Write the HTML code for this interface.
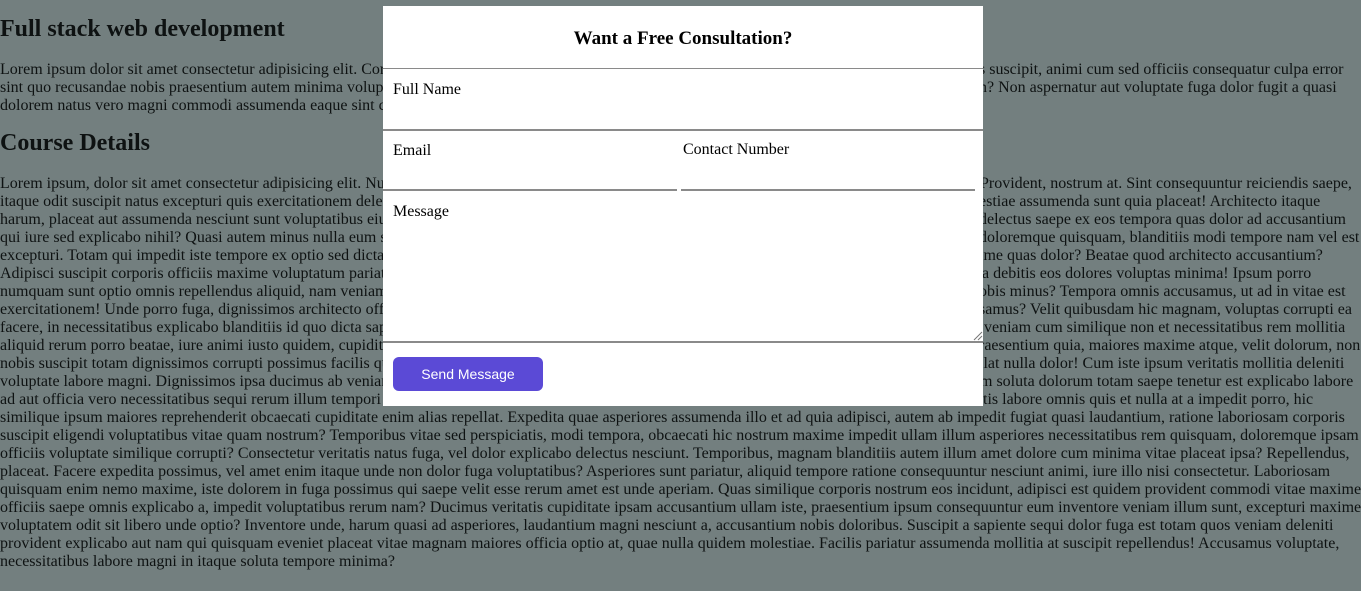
<!DOCTYPE html>
<html><head><meta charset="utf-8"><style>
html,body{margin:0;padding:0;width:1361px;height:591px;overflow:hidden;background:#737f7f;}
body{font-family:"Liberation Serif",serif;color:#0e1212;position:relative;}
.l{position:absolute;white-space:nowrap;font-size:16px;line-height:18px;}
h1,h2{position:absolute;margin:0;font-weight:bold;font-size:24px;line-height:28px;left:0;}
.m{position:absolute;left:383px;top:6px;width:600px;height:400px;background:#fff;color:#000;}
.m h3{margin:0;position:absolute;top:22px;width:100%;text-align:center;font-size:19px;line-height:22px;}
.hr{position:absolute;background:#8a8a8a;}
.lab{position:absolute;font-size:16px;line-height:18px;}
.btn{position:absolute;left:10px;top:351px;width:150px;height:34px;background:#5b4ad6;border-radius:6px;color:#fff;font-family:"Liberation Sans",sans-serif;font-size:14px;line-height:34px;text-align:center;}
</style></head><body>
<h1 style="top:15px">Full stack web development</h1>
<div class="l" style="left:0;top:61px">Lorem ipsum dolor sit amet consectetur adipisicing elit. Consectetur quibusdam ipsam dolores</div>
<div class="l" style="left:0;top:79px">sint quo recusandae nobis praesentium autem minima voluptas eveniet quaerat</div>
<div class="l" style="left:0;top:97px">dolorem natus vero magni commodi assumenda eaque sint corporis.</div>
<div class="l" style="left:979px;top:61px">s suscipit, animi cum sed officiis consequatur culpa error</div>
<div class="l" style="left:979px;top:79px">n? Non aspernatur aut voluptate fuga dolor fugit a quasi</div>
<h2 style="top:129px">Course Details</h2>
<div class="l" style="left:0;top:175px">Lorem ipsum, dolor sit amet consectetur adipisicing elit. Nulla</div>
<div class="l" style="left:0;top:193px">itaque odit suscipit natus excepturi quis exercitationem deleniti</div>
<div class="l" style="left:0;top:211px">harum, placeat aut assumenda nesciunt sunt voluptatibus eius</div>
<div class="l" style="left:0;top:229px">qui iure sed explicabo nihil? Quasi autem minus nulla eum sit</div>
<div class="l" style="left:0;top:247px">excepturi. Totam qui impedit iste tempore ex optio sed dicta</div>
<div class="l" style="left:0;top:265px">Adipisci suscipit corporis officiis maxime voluptatum pariatur</div>
<div class="l" style="left:0;top:283px">numquam sunt optio omnis repellendus aliquid, nam veniam</div>
<div class="l" style="left:0;top:301px">exercitationem! Unde porro fuga, dignissimos architecto officia</div>
<div class="l" style="left:0;top:319px">facere, in necessitatibus explicabo blanditiis id quo dicta sapiente</div>
<div class="l" style="left:0;top:337px">aliquid rerum porro beatae, iure animi iusto quidem, cupiditate</div>
<div class="l" style="left:0;top:355px">nobis suscipit totam dignissimos corrupti possimus facilis quis</div>
<div class="l" style="left:0;top:373px">voluptate labore magni. Dignissimos ipsa ducimus ab veniam</div>
<div class="l" style="left:0;top:391px">ad aut officia vero necessitatibus sequi rerum illum tempori</div>
<div class="l" style="left:980px;top:175px">Provident, nostrum at. Sint consequuntur reiciendis saepe,</div>
<div class="l" style="left:979px;top:193px">estiae assumenda sunt quia placeat! Architecto itaque</div>
<div class="l" style="left:979px;top:211px">delectus saepe ex eos tempora quas dolor ad accusantium</div>
<div class="l" style="left:979px;top:229px">doloremque quisquam, blanditiis modi tempore nam vel est</div>
<div class="l" style="left:979px;top:247px">ime quas dolor? Beatae quod architecto accusantium?</div>
<div class="l" style="left:982px;top:265px">a debitis eos dolores voluptas minima! Ipsum porro</div>
<div class="l" style="left:979px;top:283px">obis minus? Tempora omnis accusamus, ut ad in vitae est</div>
<div class="l" style="left:979px;top:301px">samus? Velit quibusdam hic magnam, voluptas corrupti ea</div>
<div class="l" style="left:984px;top:319px">veniam cum similique non et necessitatibus rem mollitia</div>
<div class="l" style="left:979px;top:337px">raesentium quia, maiores maxime atque, velit dolorum, non</div>
<div class="l" style="left:979px;top:355px">llat nulla dolor! Cum iste ipsum veritatis mollitia deleniti</div>
<div class="l" style="left:980px;top:373px">m soluta dolorum totam saepe tenetur est explicabo labore</div>
<div class="l" style="left:983px;top:391px">tis labore omnis quis et nulla at a impedit porro, hic</div>
<div class="l" style="left:0;top:409px">similique ipsum maiores reprehenderit obcaecati cupiditate enim alias repellat. Expedita quae asperiores assumenda illo et ad quia adipisci, autem ab impedit fugiat quasi laudantium, ratione laboriosam corporis</div>
<div class="l" style="left:0;top:427px">suscipit eligendi voluptatibus vitae quam nostrum? Temporibus vitae sed perspiciatis, modi tempora, obcaecati hic nostrum maxime impedit ullam illum asperiores necessitatibus rem quisquam, doloremque ipsam</div>
<div class="l" style="left:0;top:445px">officiis voluptate similique corrupti? Consectetur veritatis natus fuga, vel dolor explicabo delectus nesciunt. Temporibus, magnam blanditiis autem illum amet dolore cum minima vitae placeat ipsa? Repellendus,</div>
<div class="l" style="left:0;top:463px">placeat. Facere expedita possimus, vel amet enim itaque unde non dolor fuga voluptatibus? Asperiores sunt pariatur, aliquid tempore ratione consequuntur nesciunt animi, iure illo nisi consectetur. Laboriosam</div>
<div class="l" style="left:0;top:481px">quisquam enim nemo maxime, iste dolorem in fuga possimus qui saepe velit esse rerum amet est unde aperiam. Quas similique corporis nostrum eos incidunt, adipisci est quidem provident commodi vitae maxime</div>
<div class="l" style="left:0;top:499px">officiis saepe omnis explicabo a, impedit voluptatibus rerum nam? Ducimus veritatis cupiditate ipsam accusantium ullam iste, praesentium ipsum consequuntur eum inventore veniam illum sunt, excepturi maxime</div>
<div class="l" style="left:0;top:517px">voluptatem odit sit libero unde optio? Inventore unde, harum quasi ad asperiores, laudantium magni nesciunt a, accusantium nobis doloribus. Suscipit a sapiente sequi dolor fuga est totam quos veniam deleniti</div>
<div class="l" style="left:0;top:535px">provident explicabo aut nam qui quisquam eveniet placeat vitae magnam maiores officia optio at, quae nulla quidem molestiae. Facilis pariatur assumenda mollitia at suscipit repellendus! Accusamus voluptate,</div>
<div class="l" style="left:0;top:553px">necessitatibus labore magni in itaque soluta tempore minima?</div>

<div class="m">
  <h3>Want a Free Consultation?</h3>
  <div class="hr" style="left:0;top:62px;width:600px;height:1px;"></div>
  <div class="lab" style="left:10px;top:75px">Full Name</div>
  <div class="hr" style="left:0;top:123px;width:600px;height:2px;"></div>
  <div class="lab" style="left:10px;top:136px">Email</div>
  <div class="lab" style="left:300px;top:135px">Contact Number</div>
  <div class="hr" style="left:0;top:183px;width:294px;height:2px;"></div>
  <div class="hr" style="left:298px;top:183px;width:294px;height:2px;"></div>
  <div class="lab" style="left:10px;top:197px">Message</div>
  <svg style="position:absolute;left:590px;top:325px" width="10" height="10"><path d="M1 9 L9 1 M5 9 L9 5" stroke="#777" stroke-width="1"/></svg>
  <div class="hr" style="left:0;top:335px;width:600px;height:2px;"></div>
  <div class="btn">Send Message</div>
</div>
</body></html>
